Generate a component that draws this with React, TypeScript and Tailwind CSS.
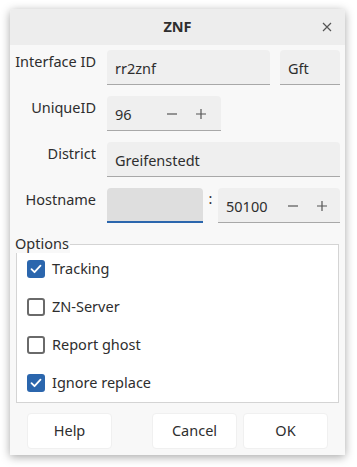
import React, { useState } from 'react';

const font = { fontFamily: '"Noto Sans", "Open Sans", sans-serif' };

const Minus = () => (
  <svg width="12" height="12" viewBox="0 0 12 12" className="text-[#555]">
    <path d="M1 6h10" stroke="currentColor" strokeWidth="1.2" />
  </svg>
);

const Plus = () => (
  <svg width="12" height="12" viewBox="0 0 12 12" className="text-[#555]">
    <path d="M1 6h10M6 1v10" stroke="currentColor" strokeWidth="1.2" />
  </svg>
);

const Check = () => (
  <svg width="12" height="10" viewBox="0 0 12 10">
    <path d="M1.5 5.2l3 3 6-6.5" fill="none" stroke="white" strokeWidth="1.8" strokeLinecap="round" strokeLinejoin="round" />
  </svg>
);

const Label: React.FC<{ children: React.ReactNode }> = ({ children }) => (
  <div className="pt-[1px] text-right whitespace-nowrap text-[14.5px] leading-[20px] text-[#2e2e2e]">{children}</div>
);

const Field: React.FC<{ value: string; className?: string }> = ({ value, className = '' }) => (
  <div className={`h-[35px] flex items-center pl-[8px] pt-[3px] bg-[#efefef] rounded-t-[4px] border-b border-[#a8a8a8] text-[14.5px] text-[#2e2e2e] ${className}`}>
    {value}
  </div>
);

const Spin: React.FC<{ value: string; className?: string; textW: string }> = ({ value, className = '', textW }) => (
  <div className={`h-[35px] flex items-center pl-[8px] pt-[3px] bg-[#efefef] rounded-t-[4px] border-b border-[#a8a8a8] text-[14.5px] text-[#2e2e2e] ${className}`}>
    <span className={textW}>{value}</span>
    <span className="flex items-center gap-[17px] -mt-[2px]">
      <Minus />
      <Plus />
    </span>
  </div>
);

const CheckRow: React.FC<{ label: string; checked: boolean; onToggle: () => void }> = ({ label, checked, onToggle }) => (
  <button onClick={onToggle} className="flex items-center h-[18px] gap-[7px] text-[14.5px] text-[#2e2e2e]">
    {checked ? (
      <span className="w-[18px] h-[18px] rounded-[3px] bg-[#2b66ad] flex items-center justify-center">
        <Check />
      </span>
    ) : (
      <span className="w-[18px] h-[18px] rounded-[3px] border-2 border-[#6a6a6a] bg-white" />
    )}
    <span>{label}</span>
  </button>
);

const App: React.FC = () => {
  const [opts, setOpts] = useState([true, false, false, true]);
  const names = ['Tracking', 'ZN-Server', 'Report ghost', 'Ignore replace'];

  const toggle = (i: number) => setOpts(o => o.map((v, j) => (j === i ? !v : v)));

  return (
    <div className="w-[357px] h-[467px] bg-white pt-[9px] pl-[10px]" style={font}>
      <div className="w-[335px] h-[446px] bg-[#f8f8f8] rounded-t-[4px] shadow-[0_2px_10px_rgba(0,0,0,0.35)] flex flex-col">
        {/* title bar */}
        <div className="relative h-[36px] bg-[#ededed] rounded-t-[4px] flex items-center justify-center">
          <span className="font-bold text-[14.5px] text-[#2e2e2e]">ZNF</span>
          <svg width="10" height="10" viewBox="0 0 10 10" className="absolute right-[13px] top-[13px]">
            <path d="M1 1l8 8M9 1l-8 8" stroke="#555" strokeWidth="1.2" />
          </svg>
        </div>

        {/* form */}
        <div className="grid grid-cols-[81px_1fr] gap-x-[11px] gap-y-[11px] pl-[5px] pr-[5px] pt-[5px]">
          <Label>Interface ID</Label>
          <div className="flex gap-[10px]">
            <Field value="rr2znf" className="w-[163px]" />
            <Field value="Gft" className="flex-1" />
          </div>

          <Label>UniqueID</Label>
          <div className="flex">
            <Spin value="96" className="w-[114px]" textW="w-[51px]" />
          </div>

          <Label>District</Label>
          <Field value="Greifenstedt" />

          <Label>Hostname</Label>
          <div className="flex">
            <div className="w-[96px] h-[35px] bg-[#dedede] rounded-t-[4px] border-b-2 border-[#2b66ad]" />
            <div className="w-[15px] text-center text-[14.5px] leading-[20px] text-[#2e2e2e]">:</div>
            <Spin value="50100" className="flex-1" textW="w-[61px]" />
          </div>
        </div>

        {/* options group */}
        <div className="relative mt-[21px] mx-[6px] h-[159px] border border-[#d4d4d4] bg-white flex flex-col gap-[20px] pl-[10px] pt-[15px]">
          <span className="absolute left-[-2px] top-[-12px] text-[14.5px] leading-[20px] text-[#2e2e2e] bg-[#f8f8f8] pr-[1px]">Options</span>
          {names.map((n, i) => (
            <CheckRow key={n} label={n} checked={opts[i]} onToggle={() => toggle(i)} />
          ))}
        </div>

        {/* buttons */}
        <div className="flex mt-[10px] pl-[17px] text-[14.5px] text-[#2e2e2e]">
          <button className="w-[85px] h-[36px] bg-white rounded-[4px] border border-[#f0f0f0]">Help</button>
          <button className="ml-[40px] w-[85px] h-[36px] bg-white rounded-[4px] border border-[#f0f0f0]">Cancel</button>
          <button className="ml-[6px] w-[85px] h-[36px] bg-white rounded-[4px] border border-[#f0f0f0]">OK</button>
        </div>
      </div>
    </div>
  );
};

export default App;
